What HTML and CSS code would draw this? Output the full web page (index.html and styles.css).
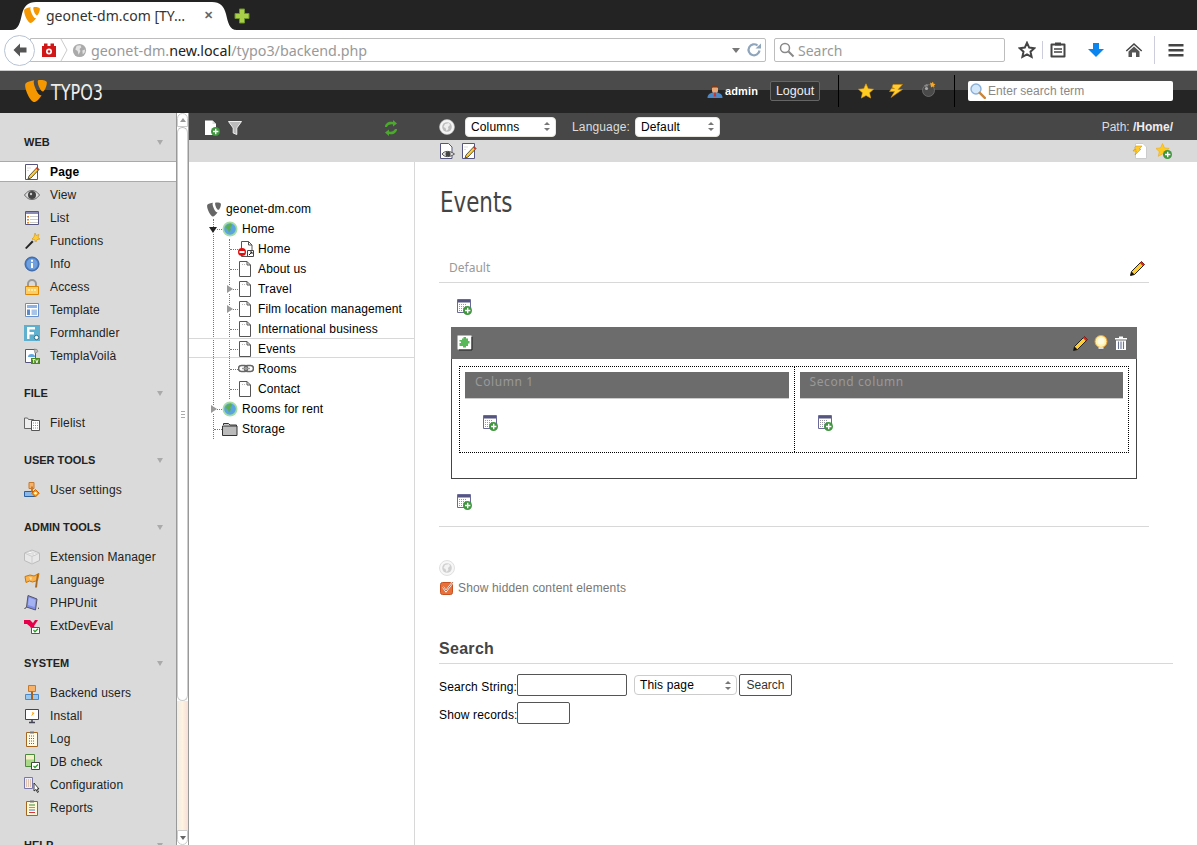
FILE: index.html
```html
<!DOCTYPE html>
<html lang="en">
<head>
  <meta charset="UTF-8" />
  <title>geonet-dm.com [TYPO3]</title>
  <link rel="stylesheet" href="styles.css">
</head>
<body>
  <!-- icon sprite -->
  <svg class="sprite" xmlns="http://www.w3.org/2000/svg">
    <symbol id="i-typo3" viewBox="0 0 24 24"><path d="M18.08 16.539c-.356.105-.64.144-1.012.144-3.048 0-7.524-10.652-7.524-14.197 0-1.305.31-1.74.745-2.114C6.56.808 2.082 2.177.651 3.917c-.31.436-.497 1.12-.497 1.99C.154 11.442 6.06 24 10.228 24c1.928 0 5.178-3.168 7.852-7.46M16.134 0c3.855 0 7.71.622 7.71 2.8 0 4.415-2.8 9.765-4.23 9.765-2.55 0-5.724-7.09-5.724-10.635C13.89.31 14.512 0 16.134 0"/></symbol>
    <symbol id="i-pencil" viewBox="0 0 16 16"><path d="M1.500 11.500 11.500 1.500l3 3-10 10-4 1z" fill="#fc3" stroke="#222"/><path d="M11.500 1.500l3 3-1.600 1.600-3-3z" fill="#d22"/><path d="M.5 15.500l1-4 3 3z" fill="#111"/></symbol>
    <symbol id="i-page-edit" viewBox="0 0 16 16"><path d="M1.500 .5h12v15h-12z" fill="#fff" stroke="#55557f"/><path d="M3.500 4h4M3.500 6.500h2" stroke="#bbb" stroke-dasharray="1 1"/><path d="M5 12 13 3.500l2 2L7 14l-3 1z" fill="#fc3" stroke="#333" stroke-width=".8"/><path d="M13 3.500l2 2-1 1-2-2z" fill="#d22"/></symbol>
    <symbol id="i-eye" viewBox="0 0 16 16"><path d="M.5 8C3 4.500 5.500 3.500 8 3.500S13 4.500 15.500 8C13 11.500 10.500 12.500 8 12.500S3 11.500 .5 8z" fill="#ddd" stroke="#666"/><circle cx="8" cy="8" r="4" fill="#444"/><circle cx="7" cy="7" r="1.200" fill="#ccc"/></symbol>
    <symbol id="i-list" viewBox="0 0 16 16"><path d="M1.500 1.500h13v13h-13z" fill="#fff" stroke="#55557f"/><path d="M2 2h12v2H2z" fill="#8a8ab8"/><path d="M3 6h2v1.500H3zM3 9h2v1.500H3zM3 12h2v1.500H3z" fill="#e8862a"/><path d="M6.500 6.500h7M6.500 9.500h7M6.500 12.500h7" stroke="#999" stroke-dasharray="1 1"/></symbol>
    <symbol id="i-wand" viewBox="0 0 16 16"><path d="M1 15 9 6.500l1.500 1.500L2.500 16z" fill="#222"/><path d="M8 7.500 9.500 6l1.500 1.500L9.500 9z" fill="#ddd"/><path d="M11 0l1 2.500L15 1.500l-1 3 2 1.500-3 .6-1 2.400-1.500-2.400L8 6l2-2z" fill="#fc3" stroke="#c80" stroke-width=".5"/></symbol>
    <symbol id="i-info" viewBox="0 0 16 16"><circle cx="8" cy="8" r="7" fill="#4a7fc8" stroke="#3560a0"/><circle cx="8" cy="8" r="5.500" fill="#6f9fdc"/><path d="M7 7h2v5H7zM7 3.700h2v2H7z" fill="#fff"/></symbol>
    <symbol id="i-lock" viewBox="0 0 16 16"><path d="M4 8V5a4 4 0 0 1 8 0v3" fill="none" stroke="#999" stroke-width="2"/><path d="M1.500 7.500h13v8h-13z" fill="#fc6" stroke="#d80"/><path d="M4 10h2v2H4zM7 10h2v2H7zM10 10h2v2h-2z" fill="#fe9"/></symbol>
    <symbol id="i-template" viewBox="0 0 16 16"><path d="M1.500 1.500h13v13h-13z" fill="#fff" stroke="#6a90c8"/><path d="M3 3h10v3H3z" fill="#8db4e8"/><path d="M3 7.500h3V13H3z" fill="#5d8ac8"/><path d="M7.500 7.500H13V13H7.500z" fill="#a8c4e8"/></symbol>
    <symbol id="i-form" viewBox="0 0 16 16"><path d="M0 0h16v16H0z" fill="#5fb0cf"/><path d="M3 2h8v2.500H5.500V7H10v2.500H5.500V14H3z" fill="#fff"/><circle cx="12.500" cy="12.500" r="2.200" fill="#fff" stroke="#2b6f8a"/></symbol>
    <symbol id="i-tv" viewBox="0 0 16 16"><path d="M1.500 1.500h10v13h-10z" fill="#fff" stroke="#55557f"/><path d="M4 9a3.500 3 0 0 1 7 0z" fill="#5fa8e0"/><path d="M10 1l3 .5 1 2-3 2z" fill="#bbb" stroke="#666" stroke-width=".5"/><path d="M7 10h9v6H7z" fill="#4a8a1c"/><path d="M8.500 11.500h2.500M9.700 11.500V15M11.700 11.500l1.200 3.500 1.200-3.500" fill="none" stroke="#fff" stroke-width=".9"/></symbol>
    <symbol id="i-filelist" viewBox="0 0 16 16"><path d="M.5 3V13.500h9V4.500h-5L3.500 3z" fill="#eee" stroke="#666"/><path d="M7.500 5.500h8v10h-8z" fill="#fff" stroke="#555"/><path d="M9 8h5M9 10.500h5M9 13h5" stroke="#a85" stroke-dasharray="1 1"/></symbol>
    <symbol id="i-usersettings" viewBox="0 0 16 16"><path d="M5 .5h5v6H5z" fill="#f6b26b" stroke="#c77a2a"/><path d="M.5 9.500h11v5H.5z" fill="#8bb8e8" stroke="#2b5f9e"/><path d="M7 4.500h2v5H7z" fill="#c77a2a"/><path d="M11.500 7.500l3.700 3.700-3.700 3.700-3.700-3.700z" fill="#f90" stroke="#c60"/><circle cx="11.500" cy="11.200" r="1.300" fill="#fff"/></symbol>
    <symbol id="i-ext" viewBox="0 0 16 16"><path d="M8 1l7.500 3v7.500L8 15 .5 11.500V4z" fill="#e8e8e8" stroke="#bbb"/><path d="M.5 4 8 7.500 15.500 4M8 7.500V15" fill="none" stroke="#ccc"/><ellipse cx="6" cy="3.500" rx="2" ry="1" fill="#fff" stroke="#bbb" stroke-width=".5"/><ellipse cx="10.500" cy="5" rx="2" ry="1" fill="#fff" stroke="#bbb" stroke-width=".5"/></symbol>
    <symbol id="i-lang" viewBox="0 0 16 16"><path d="M1 4.500 6 3l4 1 5-2.500-1.500 7-5 1.500-3-1L2 10.500z" fill="#f9b24f" stroke="#c70"/><path d="M13 2l1.500-.5L13 15.500h-2z" fill="#a66a22"/><path d="M5 5l3 .5-1 3z" fill="#fde2a8"/></symbol>
    <symbol id="i-phpunit" viewBox="0 0 16 16"><path d="M4 .5 13 4l-1.500 11L2.500 12z" fill="#7f8fe8" stroke="#556"/><path d="M5 2.500 11.500 5 10.500 12 4 10z" fill="#a4b2f2"/><path d="M.5 13.500l2-1M14 13l1 .500" stroke="#333"/></symbol>
    <symbol id="i-extdev" viewBox="0 0 16 16"><path d="M0 2h6l3 3 2-3h3L10 8l2 4H8L6 8.500 3 6H0z" fill="#e6004c"/><path d="M7.500 9.500h8v6h-8z" fill="#fff" stroke="#555"/><path d="M9.500 12l1.500 1.800 3-3" fill="none" stroke="#2a9a2a" stroke-width="1.300"/></symbol>
    <symbol id="i-beuser" viewBox="0 0 16 16"><path d="M4.500 .5h7v6h-7z" fill="#f6b26b" stroke="#c77a2a"/><path d="M1.500 9.500h13v5h-13z" fill="#9cc8f0" stroke="#4a88c8"/><path d="M7 6.500h2v8H7z" fill="#a8641c"/></symbol>
    <symbol id="i-install" viewBox="0 0 16 16"><path d="M1.500 1.500h13v10h-13z" fill="#fff" stroke="#445"/><path d="M5 14.500h6M8 11.500v3" stroke="#445" stroke-width="1.500"/><path d="M8 4l2.500 1L7 8.500 8.500 5.500z" fill="#f90"/></symbol>
    <symbol id="i-log" viewBox="0 0 16 16"><path d="M2.500 1.500h11v14h-11z" fill="#fffbe8" stroke="#a6641c"/><path d="M6 .5h4v2H6z" fill="#777"/><path d="M5 5h6M5 7.500h6M5 10h6M5 12.500h6" stroke="#d33" stroke-dasharray="1 1"/></symbol>
    <symbol id="i-db" viewBox="0 0 16 16"><path d="M1.500 .5h9v12h-9z" fill="#f5f0c8" stroke="#4a8a3a"/><path d="M2 5.500h8v6.500H2z" fill="#a8d888"/><path d="M7.500 8.500h8v7h-8z" fill="#fff" stroke="#444"/><path d="M9.500 12l1.500 1.500 3-3" fill="none" stroke="#2a9a2a" stroke-width="1.300"/></symbol>
    <symbol id="i-config" viewBox="0 0 16 16"><path d="M.5 .5h8v11h-8z" fill="#eef" stroke="#77a"/><path d="M2 3h5M2 5h5M2 7h5M2 9h5" stroke="#c96" stroke-dasharray="1 1"/><path d="M10 6v8l2-1.500 1.500 3 1-.5-1.500-3H15z" fill="#fff" stroke="#111" stroke-width=".8"/></symbol>
    <symbol id="i-reports" viewBox="0 0 16 16"><path d="M2.500 1.500h11v14h-11z" fill="#fff9d8" stroke="#a6641c"/><path d="M6 .5h4v2H6z" fill="#777"/><path d="M5 5h6" stroke="#3a8a3a"/><path d="M5 7.500h6" stroke="#e80"/><path d="M5 10h6" stroke="#38c"/><path d="M5 12.500h6" stroke="#d33"/></symbol>
    <symbol id="i-globe" viewBox="0 0 16 16"><circle cx="8" cy="8" r="7.500" fill="#a4dca4"/><circle cx="8" cy="8" r="5.800" fill="#5aa4e4"/><path d="M5 4l4-1.500 1 2-2 2 1 2-2 3.500-1-3.500-2.500-1.500z" fill="#5cb04c"/></symbol>
    <symbol id="i-globe-mono" viewBox="0 0 16 16"><circle cx="8" cy="8" r="7.500" fill="#f4f4f4" stroke="#bbb" stroke-width=".6"/><circle cx="8" cy="8" r="4.800" fill="#bdbdbd"/><path d="M6 5l4-1 1 2-2 2 .5 2-2 2-1-3-2-1z" fill="#eee"/></symbol>
    <symbol id="i-doc" viewBox="1 0 16 16"><path d="M2.500 .5h7.500l3.500 3.500v11.500h-11z" fill="#fff" stroke="#555"/><path d="M10 .5V4h3.500" fill="none" stroke="#555"/><path d="M5 3.500h4" stroke="#bbb" stroke-dasharray="1 1"/></symbol>
    <symbol id="i-doc-short" viewBox="0 0 16 16"><path d="M3.500 .5h7l3.500 3.500v11.500H3.500z" fill="#fff" stroke="#555"/><path d="M10.500 .5V4H14" fill="none" stroke="#555"/><path d="M9.500 9.500h6v6h-6z" fill="#fff" stroke="#444"/><path d="M11 14l3-3M12 11h2v2" fill="none" stroke="#222"/><circle cx="4" cy="11" r="4" fill="#e01010"/><path d="M1.500 10h5v2h-5z" fill="#fff"/></symbol>
    <symbol id="i-link" viewBox="0 0 16 16"><rect x=".5" y="4.500" width="9" height="6" rx="3" fill="none" stroke="#666" stroke-width="1.600"/><rect x="6.500" y="4.500" width="9" height="6" rx="3" fill="none" stroke="#666" stroke-width="1.600"/><path d="M4 7.500h8" stroke="#999" stroke-width="1.400"/></symbol>
    <symbol id="i-folder" viewBox="0 0 16 16"><path d="M1.500 4V2.500h5l1.500 1.500h6.500v1" fill="#ccc" stroke="#333"/><path d="M.5 5h14.500v9.500H.5z" fill="#bbb" stroke="#333"/></symbol>
    <symbol id="i-newrec" viewBox="0 0 16 16"><path d="M1.500 .5h13v13h-13z" fill="#fff" stroke="#6a6a9a"/><path d="M2 1h12v2.500H2z" fill="#55557f"/><path d="M3 5.500h8M3 7.500h8M3 9.500h6M3 11.500h5" stroke="#99a" stroke-dasharray="1 1"/><circle cx="11.500" cy="11.500" r="4.500" fill="#3f963f"/><path d="M9 10.800h2v-2h1.400v2h2v1.400h-2v2H11v-2H9z" fill="#fff"/></symbol>
    <symbol id="i-newpage" viewBox="0 0 16 16"><path d="M1 .5h7.500L12 4v11H1z" fill="#fff"/><path d="M8.500 .5V4H12" fill="#ddd"/><circle cx="11.500" cy="11.500" r="4.500" fill="#3f963f"/><path d="M9 10.800h2v-2h1.400v2h2v1.400h-2v2H11v-2H9z" fill="#fff"/></symbol>
    <symbol id="i-filter" viewBox="0 0 16 16"><path d="M1.500 1.500h13L9.800 8v6.500l-3.600-1.500V8z" fill="#bbb" stroke="#eee"/></symbol>
    <symbol id="i-refresh" viewBox="0 0 16 16"><path d="M2 7c0-4 4-6 8-5V0l4 3.500L10 6.500V4.500C7 4 5 5 4 7z" fill="#4da92e"/><path d="M14 9c0 4-4 6-8 5v2l-4-3.500L6 9.500v2c3 .5 5-.5 6-2.500z" fill="#4da92e"/></symbol>
    <symbol id="i-puzzle" viewBox="0 0 16 16"><path d="M.5 .5h14v14H.5z" fill="#fff"/><path d="M15 2v13H2" fill="none" stroke="#222"/><path d="M2.500 5H5V3.500h1.500V2H9v1.500h2V6h1.500v2.500H11V11H9v1.500H6V11H2.500V8H4V6.500H2.500z" fill="#59b859"/></symbol>
    <symbol id="i-bulb" viewBox="0 0 16 16"><circle cx="8" cy="6.500" r="6" fill="#fff3b0" stroke="#f0a030"/><circle cx="8" cy="6" r="3.500" fill="#fffbe0"/><path d="M5.500 12h5v2h-5z" fill="#ddd"/><path d="M6.500 14h3v1.500h-3z" fill="#667"/></symbol>
    <symbol id="i-trash" viewBox="0 0 16 16"><path d="M2 3h12v1.500H2zM6 1.500h4V3H6z" fill="#fff"/><path d="M3 5.500h10V15H3z" fill="#fff"/><path d="M5.500 6.500V14M8 6.500V14M10.500 6.500V14" stroke="#6a7490" stroke-width="1.100"/></symbol>
    <symbol id="i-star" viewBox="0 0 16 16"><path d="M8 .8l2.200 4.900 5.300.6-4 3.500 1.200 5.300L8 12.400l-4.700 2.700 1.200-5.300-4-3.500 5.300-.6z" fill="#fc2" stroke="#e8a010" stroke-width=".6"/></symbol>
    <symbol id="i-bolt" viewBox="0 0 16 16"><path d="M5 1.500h9.500L10 6.500h4.500L3 14.500l3.500-6H1.500l2-3h3L4 4.500z" fill="#fc3" stroke="#c80" stroke-width=".6"/></symbol>
    <symbol id="i-bomb" viewBox="0 0 16 16"><circle cx="7.500" cy="9.500" r="6" fill="#4a4a4a" stroke="#888" stroke-width=".6"/><circle cx="5.500" cy="7.500" r="1.600" fill="#aaa"/><path d="M3 4.500l3-1.500 1.500 2-3 1z" fill="#888"/><path d="M9 1.500l1.500.8 1.500-1.500.5 2 2 .2-1.500 1.500.5 1.500-2-.5-1.500 1-.3-2.200z" fill="#f9a825"/></symbol>
    <symbol id="i-admin" viewBox="0 0 16 16"><path d="M5 5a3.500 3.500 0 0 1 6 0v2.500a3 3 0 0 1-6 0z" fill="#e8a878"/><path d="M4.500 4.500C5 1 11 1 11.500 4.500z" fill="#7a3a18"/><path d="M.5 15c0-4 3-5.500 7.500-5.500S15.500 11 15.500 15z" fill="#4a88c8"/><path d="M7.300 9.500h1.400l.6 4H6.700z" fill="#d83020"/></symbol>
    <symbol id="i-lens" viewBox="0 0 16 16"><circle cx="6" cy="6" r="5" fill="#d4e8fb" stroke="#8ab0d8" stroke-width="1.400"/><path d="M9.800 9.800l5 5" stroke="#c8863a" stroke-width="2.400" stroke-linecap="round"/></symbol>
    <symbol id="i-doc-view" viewBox="0 0 16 16"><path d="M1.500 .5h8L13 4v11.500H1.500z" fill="#fff" stroke="#55557f"/><path d="M3 11c2.500-3.500 8-3.500 12.500 0C11 14.500 5.500 14.500 3 11z" fill="#ddd" stroke="#555"/><circle cx="9" cy="11" r="2.500" fill="#444"/></symbol>
    <symbol id="i-doc-bolt" viewBox="0 0 16 16"><path d="M3.500 .5h7.500l3.500 3.500v11.500h-11z" fill="#fff" stroke="#ccc"/><path d="M4 3h6L7 6h2l-6 6 1.500-4H1l1-1.500h2L2.500 5z" fill="#fc3" stroke="#c80" stroke-width=".5"/></symbol>
    <symbol id="i-star-add" viewBox="0 0 16 16"><path d="M6.500 .5l2 4.400 4.700.5-3.500 3.200 1 4.700-4.200-2.400-4.200 2.400 1-4.700L-.2 5.400l4.700-.5z" fill="#fc2" stroke="#e8a010" stroke-width=".5"/><circle cx="11.500" cy="11.500" r="4.500" fill="#3f963f"/><path d="M9 10.800h2v-2h1.400v2h2v1.400h-2v2H11v-2H9z" fill="#fff"/></symbol>
    <symbol id="i-check" viewBox="0 0 16 16"><rect x="1.500" y="2.500" width="12" height="12" rx="2" fill="#e8703a" stroke="#c85020"/><path d="M4 7l3 4 7-9" fill="none" stroke="#fff" stroke-width="2"/><path d="M4 7l3 4 7-9" fill="none" stroke="#7a3a18" stroke-width=".7"/></symbol>
  </svg>

  <!-- browser window -->
  <div class="tabbar">
    <div class="tab">
      <svg class="fav"><use href="#i-typo3"/></svg>
      <span class="tab-title">geonet-dm.com [TY…</span>
      <span class="tab-close">✕</span>
    </div>
    <svg class="tab-new" viewBox="0 0 16 16"><path d="M5.500 1h5v4.500H15v5h-4.500V15h-5v-4.500H1v-5h4.500z" fill="#a8d048" stroke="#6e9428"/></svg>
  </div>

  <div class="navbar">
    <div class="back">
      <svg viewBox="0 0 16 16"><path d="M8 1.500 1.500 8 8 14.500V10.500h6.500v-5H8z" fill="#555"/></svg>
    </div>
    <div class="urlbar">
      <svg class="addon" viewBox="0 0 16 16"><path d="M1 4h14v11H1zM3 1.500h3.500V4H3zM9.500 1.500H13V4H9.500z" fill="#d01818"/><circle cx="8" cy="9.500" r="3" fill="#fff"/><circle cx="8" cy="9.500" r="1.300" fill="#d01818"/></svg>
      <svg class="chev" viewBox="0 0 8 24"><path d="M1 1l6 11-6 11" fill="none" stroke="#ccc"/></svg>
      <svg class="urlglobe" viewBox="0 0 16 16"><circle cx="8" cy="8" r="7" fill="#aaa"/><path d="M5 3l4-.5 1 2-2 2 1 2-2 4-1-4L3.500 7zM11 8l3-1-.5 3-2 2z" fill="#e4e4e4"/></svg>
      <span class="url"><span class="dim">geonet-dm.</span>new.local<span class="dim">/typo3/backend.php</span></span>
      <span class="url-drop"></span>
      <svg class="reload" viewBox="0 0 16 16"><path d="M13.500 8.500a5.500 5.500 0 1 1-2-5" fill="none" stroke="#8fa5bb" stroke-width="2.200"/><path d="M9.500 6.500 15 1.500v5z" fill="#8fa5bb"/></svg>
    </div>
    <div class="searchbar">
      <svg viewBox="0 0 16 16"><circle cx="6" cy="6" r="4.500" fill="none" stroke="#888" stroke-width="1.500"/><path d="M9.500 9.500l5 5" stroke="#888" stroke-width="2"/></svg>
      <span>Search</span>
    </div>
    <svg class="tool tool-star" viewBox="0 0 18 18"><path d="M9 1.800l2.200 4.800 5.200.6-3.900 3.500 1.100 5.200L9 13.300l-4.600 2.600 1.100-5.200-3.900-3.500 5.200-.6z" fill="none" stroke="#444" stroke-width="2"/></svg>
    <span class="tool-sep sep-a"></span>
    <svg class="tool tool-clip" viewBox="0 0 18 18"><path d="M2.500 3.500h13v12h-13z" fill="none" stroke="#444" stroke-width="2" stroke-linejoin="round"/><path d="M6 1.500h6v3H6z" fill="#444"/><path d="M5 8h8M5 11h8" stroke="#444" stroke-width="1.500"/></svg>
    <svg class="tool tool-down" viewBox="0 0 18 18"><path d="M6 2h6v6h5l-8 8-8-8h5z" fill="#0a84ee"/></svg>
    <svg class="tool tool-home" viewBox="0 0 18 18"><path d="M9 2 .8 9.500l1 1L9 4l7.200 6.500 1-1z" fill="#444"/><path d="M3.500 10.500 9 5.500l5.500 5V16h-3.500v-4.500H7V16H3.500z" fill="#555"/></svg>
    <span class="tool-sep sep-b"></span>
    <svg class="tool tool-menu" viewBox="0 0 18 18"><path d="M1.500 3h15v2.500h-15zM1.500 8h15v2.500h-15zM1.500 13h15v2.500h-15z" fill="#444"/></svg>
  </div>

  <!-- typo3 top bar -->
  <header class="topbar">
    <svg class="logo"><use href="#i-typo3"/></svg>
    <span class="logo-text">TYPO3</span>
    <div class="topbar-right">
      <svg class="ic"><use href="#i-admin"/></svg>
      <span class="username">admin</span>
      <span class="logout">Logout</span>
      <span class="topsep sep-user"></span>
      <svg class="ic"><use href="#i-star"/></svg>
      <svg class="ic tool-bolt"><use href="#i-bolt"/></svg>
      <svg class="ic tool-bomb"><use href="#i-bomb"/></svg>
      <span class="topsep sep-tools"></span>
      <div class="topsearch">
        <svg class="ic"><use href="#i-lens"/></svg>
        <span>Enter search term</span>
      </div>
    </div>
  </header>

  <div class="backend">
    <nav class="modules">
      <section class="group">
        <h3>WEB</h3>
        <a class="mod active"><svg class="ic"><use href="#i-page-edit"/></svg>Page</a>
        <a class="mod"><svg class="ic"><use href="#i-eye"/></svg>View</a>
        <a class="mod"><svg class="ic"><use href="#i-list"/></svg>List</a>
        <a class="mod"><svg class="ic"><use href="#i-wand"/></svg>Functions</a>
        <a class="mod"><svg class="ic"><use href="#i-info"/></svg>Info</a>
        <a class="mod"><svg class="ic"><use href="#i-lock"/></svg>Access</a>
        <a class="mod"><svg class="ic"><use href="#i-template"/></svg>Template</a>
        <a class="mod"><svg class="ic"><use href="#i-form"/></svg>Formhandler</a>
        <a class="mod"><svg class="ic"><use href="#i-tv"/></svg>TemplaVoilà</a>
      </section>
      <section class="group">
        <h3>FILE</h3>
        <a class="mod"><svg class="ic"><use href="#i-filelist"/></svg>Filelist</a>
      </section>
      <section class="group">
        <h3>USER TOOLS</h3>
        <a class="mod"><svg class="ic"><use href="#i-usersettings"/></svg>User settings</a>
      </section>
      <section class="group">
        <h3>ADMIN TOOLS</h3>
        <a class="mod"><svg class="ic"><use href="#i-ext"/></svg>Extension Manager</a>
        <a class="mod"><svg class="ic"><use href="#i-lang"/></svg>Language</a>
        <a class="mod"><svg class="ic"><use href="#i-phpunit"/></svg>PHPUnit</a>
        <a class="mod"><svg class="ic"><use href="#i-extdev"/></svg>ExtDevEval</a>
      </section>
      <section class="group">
        <h3>SYSTEM</h3>
        <a class="mod"><svg class="ic"><use href="#i-beuser"/></svg>Backend users</a>
        <a class="mod"><svg class="ic"><use href="#i-install"/></svg>Install</a>
        <a class="mod"><svg class="ic"><use href="#i-log"/></svg>Log</a>
        <a class="mod"><svg class="ic"><use href="#i-db"/></svg>DB check</a>
        <a class="mod"><svg class="ic"><use href="#i-config"/></svg>Configuration</a>
        <a class="mod"><svg class="ic"><use href="#i-reports"/></svg>Reports</a>
      </section>
      <section class="group">
        <h3>HELP</h3>
      </section>
    </nav>

    <div class="scroller">
      <span class="scroll-btn up"></span>
      <span class="scroll-thumb"><i></i></span>
      <span class="scroll-track"></span>
      <span class="scroll-btn down"></span>
    </div>

    <aside class="treepanel">
      <div class="bar-dark tree-tools">
        <svg class="ic"><use href="#i-newpage"/></svg>
        <svg class="ic"><use href="#i-filter"/></svg>
        <svg class="ic tree-refresh"><use href="#i-refresh"/></svg>
      </div>
      <div class="bar-grey"></div>
      <div class="tree">
        <div class="tree-root"><svg class="root-logo"><use href="#i-typo3"/></svg>geonet-dm.com</div>
        <ul class="branch">
          <li>
            <div class="node"><i class="tw open"></i><i class="dash"></i><svg class="ic"><use href="#i-globe"/></svg>Home</div>
            <ul class="branch">
              <li><div class="node"><i class="dash"></i><svg class="ic"><use href="#i-doc-short"/></svg>Home</div></li>
              <li><div class="node"><i class="dash"></i><svg class="ic"><use href="#i-doc"/></svg>About us</div></li>
              <li><div class="node"><i class="tw"></i><i class="dash"></i><svg class="ic"><use href="#i-doc"/></svg>Travel</div></li>
              <li><div class="node"><i class="tw"></i><i class="dash"></i><svg class="ic"><use href="#i-doc"/></svg>Film location management</div></li>
              <li><div class="node"><i class="dash"></i><svg class="ic"><use href="#i-doc"/></svg>International business</div></li>
              <li><div class="node selected"><i class="dash"></i><svg class="ic"><use href="#i-doc"/></svg>Events</div></li>
              <li><div class="node"><i class="dash"></i><svg class="ic"><use href="#i-link"/></svg>Rooms</div></li>
              <li class="end"><div class="node"><i class="dash"></i><svg class="ic"><use href="#i-doc"/></svg>Contact</div></li>
            </ul>
          </li>
          <li><div class="node"><i class="tw"></i><i class="dash"></i><svg class="ic"><use href="#i-globe"/></svg>Rooms for rent</div></li>
          <li class="end"><div class="node"><i class="dash"></i><svg class="ic"><use href="#i-folder"/></svg>Storage</div></li>
        </ul>
      </div>
    </aside>

    <main class="contentpanel">
      <div class="bar-dark doc-tools">
        <svg class="ic"><use href="#i-globe-mono"/></svg>
        <div class="select sel-view">Columns<i class="updown"></i></div>
        <span class="lang-label">Language:</span>
        <div class="select sel-lang">Default<i class="updown"></i></div>
        <span class="path">Path: <b>/Home/</b></span>
      </div>
      <div class="bar-grey doc-buttons">
        <svg class="ic"><use href="#i-doc-view"/></svg>
        <svg class="ic"><use href="#i-page-edit"/></svg>
        <svg class="ic push"><use href="#i-doc-bolt"/></svg>
        <svg class="ic"><use href="#i-star-add"/></svg>
      </div>

      <div class="doc">
        <h1>Events</h1>

        <div class="section-head">
          <span>Default</span>
          <svg class="ic"><use href="#i-pencil"/></svg>
        </div>
        <svg class="ic add add-first"><use href="#i-newrec"/></svg>

        <div class="ce">
          <div class="ce-head">
            <svg class="ic"><use href="#i-puzzle"/></svg>
            <svg class="ic push"><use href="#i-pencil"/></svg>
            <svg class="ic"><use href="#i-bulb"/></svg>
            <svg class="ic"><use href="#i-trash"/></svg>
          </div>
          <div class="grid">
            <div class="col">
              <div class="col-head">Column 1</div>
              <svg class="ic add"><use href="#i-newrec"/></svg>
            </div>
            <div class="col">
              <div class="col-head">Second column</div>
              <svg class="ic add"><use href="#i-newrec"/></svg>
            </div>
          </div>
        </div>

        <svg class="ic add add-last"><use href="#i-newrec"/></svg>
        <hr class="rule">

        <svg class="ic legend-globe"><use href="#i-globe-mono"/></svg>
        <div class="show-hidden"><svg class="ic"><use href="#i-check"/></svg>Show hidden content elements</div>

        <h2>Search</h2>
        <form class="search-form">
          <div class="form-row">
            <label>Search String:</label>
            <input class="field field-wide" type="text">
            <div class="select sel-scope">This page<i class="updown"></i></div>
            <button class="btn" type="button">Search</button>
          </div>
          <div class="form-row">
            <label>Show records:</label>
            <input class="field field-small" type="text">
          </div>
        </form>
      </div>
    </main>
  </div>
</body>
</html>
```

FILE: styles.css
```css
* { box-sizing: border-box; }

html, body {
  margin: 0;
  height: 845px;
  overflow: hidden;
}

body {
  font-family: "Liberation Sans", Arial, sans-serif;
  font-size: 12px;
  letter-spacing: .14px;
  color: #000;
  background: #fff;
}

.sprite {
  position: absolute;
  width: 0;
  height: 0;
}

.ic {
  width: 16px;
  height: 16px;
  flex: none;
}

.push { margin-left: auto; }

/* browser chrome */
.tabbar {
  height: 30px;
  background: #232323;
  display: flex;
  align-items: flex-end;
  padding-left: 11px;
}

.tab {
  width: 226px;
  height: 28px;
  background: #fff;
  display: flex;
  align-items: center;
  padding: 0 0 2px 13px;
  clip-path: path("M0 28 C8 28 9 20 11 12 C13 4 17 0 25 0 L201 0 C209 0 213 4 215 12 C217 20 218 28 226 28 Z");
}

.fav {
  width: 16px;
  height: 16px;
  fill: #f49700;
}

.tab-title {
  margin-left: 6px;
  width: 146px;
  white-space: nowrap;
  font-family: "Noto Sans", sans-serif;
  font-size: 14px;
  letter-spacing: 0;
  color: #333;
}

.tab-close {
  margin-left: 12px;
  font-size: 11px;
  font-weight: bold;
  color: #666;
}

.tab-new {
  width: 16px;
  height: 16px;
  margin: 0 0 6px -3px;
}

.navbar {
  height: 40px;
  background: #fff;
  display: flex;
  align-items: center;
  padding-left: 4px;
}

.back {
  width: 31px;
  height: 31px;
  border: 1px solid #b8c4d4;
  border-radius: 50%;
  background: #fff;
  display: flex;
  align-items: center;
  justify-content: center;
  position: relative;
  z-index: 1;
}

.back svg { width: 16px; height: 16px; }

.urlbar {
  width: 736px;
  height: 24px;
  margin-left: -5px;
  border: 1px solid #bdbdbd;
  border-radius: 0 2px 2px 0;
  display: flex;
  align-items: center;
  padding-left: 10px;
}

.addon { width: 16px; height: 16px; }
.chev { width: 8px; height: 24px; margin-left: 3px; }
.urlglobe { width: 15px; height: 15px; margin-left: 4px; }

.url {
  margin-left: 4px;
  font-family: "Noto Sans", sans-serif;
  font-size: 14.3px;
  letter-spacing: 0;
  color: #222;
  white-space: nowrap;
}

.url .dim { color: #999; }

.url-drop {
  margin-left: auto;
  border: 4px solid transparent;
  border-top: 5px solid #777;
  border-bottom: 0;
}

.reload {
  width: 16px;
  height: 16px;
  margin: 0 3px 0 6px;
}

.searchbar {
  width: 231px;
  height: 24px;
  margin-left: 8px;
  border: 1px solid #bdbdbd;
  border-radius: 2px;
  display: flex;
  align-items: center;
  padding-left: 4px;
  font-family: "Noto Sans", sans-serif;
  font-size: 14px;
  letter-spacing: 0;
  color: #999;
}

.searchbar svg { width: 16px; height: 16px; margin-right: 3px; }

.tool { width: 18px; height: 18px; flex: none; }
.tool-star { margin-left: 13px; }
.tool-clip { margin-left: 6px; }
.tool-down { margin-left: 20px; }
.tool-home { margin-left: 20px; }
.tool-menu { margin-left: 12px; }

.tool-sep {
  width: 1px;
  background: #ccd;
  flex: none;
}

.sep-a { height: 18px; margin-left: 6px; }
.sep-b { height: 28px; margin-left: 11px; }

/* typo3 top bar */
.topbar {
  height: 43px;
  border-top: 1px solid #ccc;
  background: linear-gradient(#4b4b4b 0, #4b4b4b 19px, #252525 19px);
  display: flex;
  align-items: center;
  padding: 0 24px 2px 25px;
}

.logo {
  width: 22px;
  height: 24px;
  fill: #f49700;
}

.logo-text {
  margin-left: 4px;
  padding-top: 3px;
  display: inline-block;
  transform: scaleX(.81);
  transform-origin: left center;
  font-family: "DejaVu Sans Condensed", "DejaVu Sans", sans-serif;
  font-stretch: condensed;
  font-size: 22px;
  letter-spacing: 0;
  color: #eee;
}

.topbar-right {
  margin-left: auto;
  display: flex;
  align-items: center;
}

.username {
  margin-left: 2px;
  font-size: 11px;
  font-weight: bold;
  color: #fff;
}

.logout {
  margin-left: 12px;
  width: 50px;
  height: 20px;
  line-height: 19px;
  text-align: center;
  border: 1px solid #666;
  border-radius: 2px;
  background: #333;
  font-size: 12.5px;
  letter-spacing: 0;
  color: #eee;
}

.topsep {
  width: 1px;
  height: 32px;
  background: #000;
}

.sep-user { margin: 0 19px 0 18px; }
.tool-bolt { margin-left: 14px; }
.tool-bomb { margin: -4px 0 0 17px; }
.sep-tools { margin: 0 13px 0 17px; }

.topsearch {
  width: 205px;
  height: 20px;
  background: #fff;
  border-radius: 2px;
  display: flex;
  align-items: center;
  gap: 2px;
  padding-left: 2px;
  letter-spacing: .05px;
  color: #888;
}

/* backend columns */
.backend {
  display: flex;
  height: 732px;
  overflow: hidden;
}

.modules {
  width: 177px;
  flex: none;
  background: #dadada;
  border-right: 1px solid #999;
  padding-top: 19px;
  overflow: hidden;
}

.group { margin-bottom: 17px; }

.group h3 {
  margin: 0 0 10px;
  height: 19px;
  padding: 1px 13px 0 24px;
  font-size: 11px;
  font-weight: bold;
  letter-spacing: 0;
  color: #222;
  display: flex;
  align-items: center;
  justify-content: space-between;
}

.group h3::after {
  content: "";
  border: 3px solid transparent;
  border-top: 5px solid #aaa;
  border-bottom: 0;
}

.mod {
  height: 21px;
  margin-bottom: 2px;
  padding-left: 24px;
  border-top: 1px solid transparent;
  border-bottom: 1px solid transparent;
  display: flex;
  align-items: center;
  gap: 10px;
  color: #222;
}

.mod.active {
  background: #fff;
  border-color: #aaa;
  font-weight: bold;
  color: #000;
}

.scroller {
  width: 12px;
  flex: none;
  display: flex;
  flex-direction: column;
  background: #fff;
  border-right: 1px solid #999;
}

.scroll-btn {
  height: 14px;
  flex: none;
  display: flex;
  justify-content: center;
  align-items: center;
  background: #fff;
  border: 1px solid #ccc;
  border-radius: 6px 6px 0 0;
}

.scroll-btn.down { height: 15px; border-radius: 0 0 6px 6px; }

.scroll-btn.up::after {
  content: "";
  border: 3px solid transparent;
  border-bottom: 4px solid #999;
  border-top: 0;
}

.scroll-btn.down::after {
  content: "";
  border: 3px solid transparent;
  border-top: 4px solid #666;
  border-bottom: 0;
}

.scroll-thumb {
  height: 574px;
  flex: none;
  background: #fff;
  border: 1px solid #ccc;
  border-top-color: #bbb;
  border-radius: 6px;
  display: flex;
  align-items: center;
  justify-content: center;
}

.scroll-thumb i {
  width: 4px;
  height: 7px;
  background: repeating-linear-gradient(#aaa 0, #aaa 1px, #fff 1px, #fff 3px);
}

.scroll-track {
  flex: 1;
  background: linear-gradient(90deg, #f0ece8 0, #fdf3e0 50%, #f8ddd8 100%);
}

.treepanel {
  width: 226px;
  flex: none;
  display: flex;
  flex-direction: column;
}

.bar-dark {
  height: 27px;
  flex: none;
  background: #474747;
  display: flex;
  align-items: center;
  color: #ddd;
}

.bar-grey {
  height: 22px;
  flex: none;
  background: #dadada;
  display: flex;
  align-items: center;
}

.tree-tools { padding: 2px 16px 0 15px; gap: 7px; }
.tree-refresh { margin-left: auto; }

.tree {
  flex: 1;
  border-right: 1px solid #d8d8d8;
  padding: 37px 0 0 18px;
}

.tree-root {
  height: 20px;
  display: flex;
  align-items: center;
  gap: 5px;
}

.root-logo {
  width: 14px;
  height: 15px;
  fill: #666;
}

.branch {
  list-style: none;
  margin: 0 0 10px 6px;
  padding: 0;
  border-left: 1px dotted #777;
}

.branch .branch {
  margin-left: 15px;
}

.end { margin-bottom: -10px; }

.node {
  height: 20px;
  display: flex;
  align-items: center;
  gap: 0;
  position: relative;
  white-space: nowrap;
}

.node .ic { margin-right: 4px; }

.dash {
  width: 8px;
  border-top: 1px dotted #777;
  flex: none;
}

.tw {
  position: absolute;
  left: -3px;
  top: 6px;
  border: 4px solid transparent;
  border-left: 6px solid #999;
  border-right: 0;
  background: #fff;
}

.tw.open {
  left: -5px;
  top: 8px;
  border: 4px solid transparent;
  border-top: 6px solid #222;
  border-bottom: 0;
}

.selected::before {
  content: "";
  position: absolute;
  left: -41px;
  width: 225px;
  top: -1px;
  bottom: 1px;
  border-top: 1px solid #d8d8d8;
  border-bottom: 1px solid #d8d8d8;
}

/* content column */
.contentpanel {
  flex: 1;
  display: flex;
  flex-direction: column;
  min-width: 0;
}

.doc-tools { padding: 0 24px; }

.select {
  height: 20px;
  background: #fff;
  border-radius: 4px;
  border: 1px solid #e8e8e0;
  color: #000;
  display: flex;
  align-items: center;
  justify-content: space-between;
  padding: 0 5px;
}

.updown {
  display: flex;
  flex-direction: column;
  align-items: center;
  gap: 3px;
}

.updown::before {
  content: "";
  border: 3px solid transparent;
  border-bottom: 3px solid #777;
  border-top: 0;
}

.updown::after {
  content: "";
  border: 3px solid transparent;
  border-top: 3px solid #777;
  border-bottom: 0;
}

.sel-view { width: 91px; margin-left: 10px; }
.lang-label { margin: 0 5px 0 16px; }
.sel-lang { width: 85px; }

.path { margin-left: auto; letter-spacing: 0; }
.path b { color: #eee; }

.doc-buttons { padding: 0 25px 0 24px; gap: 6px; }
.doc-buttons .push { margin-right: 2px; }

.doc { padding: 26px 24px 0; }

.doc h1 {
  margin: 0 0 0 1px;
  height: 30px;
  line-height: 30px;
  transform: scaleX(.85);
  transform-origin: left center;
  font-family: "DejaVu Sans Condensed", "DejaVu Sans", sans-serif;
  font-stretch: condensed;
  font-weight: normal;
  font-size: 28px;
  letter-spacing: 0;
  color: #444;
}

.section-head {
  margin: 35px 24px 0 0;
  height: 30px;
  padding: 0 3px 0 10px;
  border-bottom: 1px solid #d8d8d8;
  display: flex;
  align-items: center;
  justify-content: space-between;
  font-family: "Noto Sans", sans-serif;
  letter-spacing: 0;
  color: #999;
}

.add { display: block; }
.add-first { margin: 16px 0 0 17px; }
.add-last { margin: 15px 0 0 17px; }

.ce {
  margin: 12px 12px 0;
  width: 686px;
  height: 152px;
  border: 1px solid #444;
  border-top: 0;
}

.ce-head {
  height: 32px;
  margin: 0 -1px;
  background: #6c6c6c;
  display: flex;
  align-items: center;
  gap: 4px;
  padding: 0 8px 0 6px;
}

.grid {
  margin: 7px 7px 0;
  height: 87px;
  border: 1px dotted #000;
  display: flex;
}

.col {
  flex: 1;
  padding: 5px;
}

.col + .col { border-left: 1px dotted #000; }

.col-head {
  height: 27px;
  padding-left: 10px;
  line-height: 20px;
  background: #6c6c6c;
  border-bottom: 1px solid #ccc;
  font-family: "Noto Sans", sans-serif;
  font-size: 12px;
  letter-spacing: .6px;
  color: #999;
}

.col .add { margin: 16px 0 0 17px; }

.rule {
  margin: 16px 24px 0 0;
  border: 0;
  border-top: 1px solid #d8d8d8;
}

.legend-globe { display: block; margin-top: 33px; opacity: .7; }

.show-hidden {
  margin-top: 4px;
  display: flex;
  align-items: center;
  gap: 3px;
  color: #777;
}

.doc h2 {
  margin: 42px 0 0;
  height: 26px;
  line-height: 22px;
  font-size: 16px;
  letter-spacing: .3px;
  color: #444;
  border-bottom: 1px solid #d8d8d8;
}

.search-form { margin-top: 10px; }

.form-row {
  display: flex;
  align-items: center;
  height: 22px;
  margin-bottom: 6px;
}

.form-row label {
  width: 78px;
  padding-top: 3px;
  white-space: nowrap;
}

.field {
  height: 22px;
  border: 1px solid #555;
  border-radius: 2px;
  background: #fff;
}

.field-wide { width: 110px; }
.field-small { width: 53px; }

.sel-scope {
  width: 103px;
  margin-left: 7px;
  border-color: #ccc;
}

.btn {
  width: 53px;
  height: 22px;
  margin-left: 2px;
  padding: 0;
  border: 1px solid #555;
  border-radius: 2px;
  background: #fff;
  font: 12px "Liberation Sans", Arial, sans-serif;
  color: #333;
}
```
